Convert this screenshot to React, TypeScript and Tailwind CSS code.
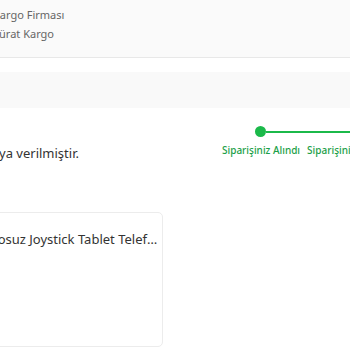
import React from 'react';

export default function App() {
    return (
        <div className="w-[350px] h-[350px] overflow-hidden bg-white font-['Noto_Sans','Open_Sans',sans-serif]">
            {/* CARGO INFO */}
            <div className="h-[58px] bg-[#fafafa] border-b border-[#e8e8e8] pt-[6px] ml-[-7px]">
                <p className="text-[11px] leading-[18px] text-[#666]">Kargo Firması</p>
                <p className="text-[11px] leading-[18px] mt-[1px] text-[#666]">Sürat Kargo</p>
            </div>

            <div className="h-[14px]" />
            <div className="h-[36px] bg-[#f9f9f9]" />

            {/* STATUS ROW */}
            <div className="flex items-start mt-[18px] h-[86px]">
                <div className="w-[222px] shrink-0 pt-[18px]">
                    <p className="ml-[-101px] text-[13px] leading-[18px] text-[#333] whitespace-nowrap">
                        Siparişiniz kargoya verilmiştir.
                    </p>
                </div>
                <div className="flex-1 min-w-0">
                    <div className="flex items-center h-[11px] pl-[33px]">
                        <div className="w-[11px] h-[11px] rounded-full bg-[#1bb94a] shrink-0" />
                        <div className="flex-1 h-[2px] bg-[#1bb94a]" />
                    </div>
                    <div className="flex gap-[7px] mt-[6px] whitespace-nowrap">
                        <span className="text-[10px] leading-[14px] font-medium text-[#1ba048]">Siparişiniz Alındı</span>
                        <span className="text-[10px] leading-[14px] font-medium text-[#1ba048]">Siparişiniz Hazırlanıyor</span>
                    </div>
                </div>
            </div>

            {/* PRODUCT CARD */}
            <div className="ml-[-60px] w-[223px] h-[135px] border border-[#ececec] rounded-[5px] bg-white pt-[17px] pl-[30px]">
                <p className="text-[13px] leading-[18px] text-[#333] whitespace-nowrap overflow-hidden text-ellipsis w-[190px]">
                    Kablosuz Joystick Tablet Telefon Oyun Kolu
                </p>
            </div>
        </div>
    );
}
